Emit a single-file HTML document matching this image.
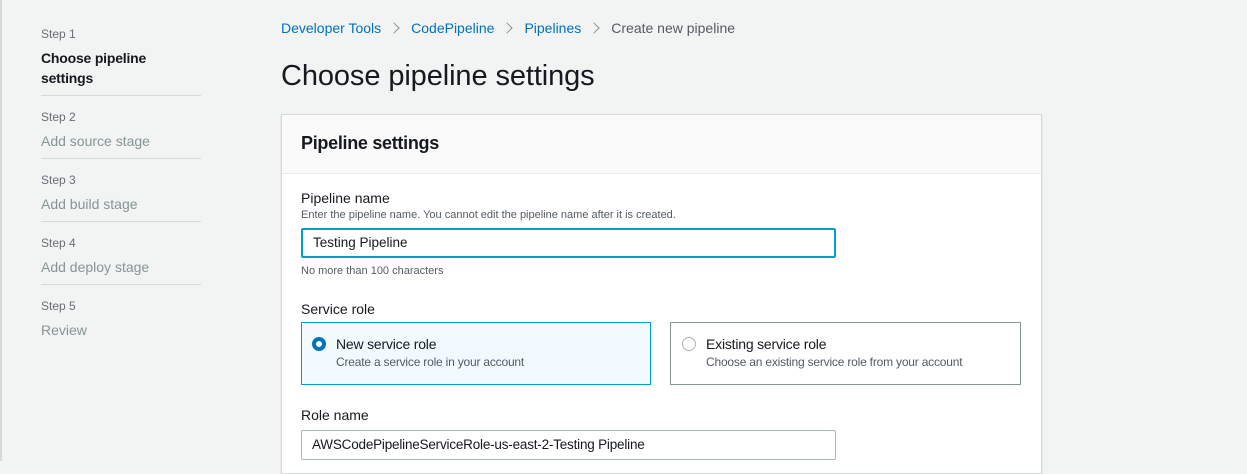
<!DOCTYPE html>
<html><head><style>
*{margin:0;padding:0;box-sizing:border-box}
body{width:1247px;height:461px;overflow:hidden;background:#f2f3f3;font-family:"Liberation Sans",sans-serif;color:#16191f;position:relative}
.a{position:absolute;white-space:nowrap}
.step{font-size:12px;color:#687078}
.sl{font-size:14px;color:#879596}
.hr{position:absolute;left:41px;width:160px;height:1px;background:#d5dbdb}
.bc{font-size:14px;color:#0073bb}
.chev{display:inline-block;width:8px;height:8px;border-top:1.5px solid #879596;border-right:1.5px solid #879596;transform:rotate(45deg);margin:0 13px 1px 9px}
</style></head><body>
<div class="a" style="left:0;top:0;width:2px;height:461px;background:#d5dbdb"></div>
<div class="a step" style="left:41px;top:27px">Step 1</div>
<div class="a" style="left:41px;top:48px;font-size:14px;font-weight:bold;line-height:20px;letter-spacing:-0.2px">Choose pipeline<br>settings</div>
<div class="hr" style="top:95px"></div>
<div class="a step" style="left:41px;top:110px">Step 2</div>
<div class="a sl" style="left:41px;top:133px">Add source stage</div>
<div class="hr" style="top:158px"></div>
<div class="a step" style="left:41px;top:173px">Step 3</div>
<div class="a sl" style="left:41px;top:196px">Add build stage</div>
<div class="hr" style="top:221px"></div>
<div class="a step" style="left:41px;top:236px">Step 4</div>
<div class="a sl" style="left:41px;top:259px">Add deploy stage</div>
<div class="hr" style="top:284px"></div>
<div class="a step" style="left:41px;top:299px">Step 5</div>
<div class="a sl" style="left:41px;top:322px">Review</div>

<div class="a" style="left:281px;top:20px;font-size:14px">
<span class="bc">Developer Tools</span><span class="chev"></span><span class="bc">CodePipeline</span><span class="chev"></span><span class="bc">Pipelines</span><span class="chev"></span><span style="color:#545b64">Create new pipeline</span></div>
<div class="a" style="left:281px;top:60px;font-size:29px;letter-spacing:-0.1px">Choose pipeline settings</div>

<div class="a" style="left:281px;top:114px;width:761px;height:360px;background:#fff;border:1px solid #d5dbdb;box-shadow:0 1px 1px rgba(0,28,36,.2)">
 <div style="height:59px;background:#fafafa;border-bottom:1px solid #eaeded"></div>
</div>
<div class="a" style="left:301px;top:133px;font-size:18px;font-weight:bold;letter-spacing:-0.3px">Pipeline settings</div>
<div class="a" style="left:301px;top:190px;font-size:14px">Pipeline name</div>
<div class="a" style="left:301px;top:209px;font-size:11px;color:#545b64">Enter the pipeline name. You cannot edit the pipeline name after it is created.</div>
<div class="a" style="left:301px;top:228px;width:535px;height:30px;border:2px solid #00a1c9;border-radius:2px;font-size:13.5px;padding:5px 10px">Testing Pipeline</div>
<div class="a" style="left:301px;top:265px;font-size:11px;color:#545b64">No more than 100 characters</div>
<div class="a" style="left:301px;top:301px;font-size:14px">Service role</div>
<div class="a" style="left:301px;top:322px;width:350px;height:63px;background:#f1faff;border:1px solid #00a1c9"></div>
<div class="a" style="left:312px;top:337px;width:14px;height:14px;border-radius:50%;border:4px solid #0073bb;background:#fff"></div>
<div class="a" style="left:336px;top:336px;font-size:14px;letter-spacing:-0.2px">New service role</div>
<div class="a" style="left:336px;top:355px;font-size:12px;color:#545b64;letter-spacing:-0.2px">Create a service role in your account</div>
<div class="a" style="left:670px;top:322px;width:351px;height:63px;background:#fff;border:1px solid #879596"></div>
<div class="a" style="left:682px;top:337px;width:14px;height:14px;border-radius:50%;border:1px solid #aab7b8;background:#fff"></div>
<div class="a" style="left:706px;top:336px;font-size:14px;letter-spacing:-0.2px">Existing service role</div>
<div class="a" style="left:706px;top:355px;font-size:12px;color:#545b64;letter-spacing:-0.2px">Choose an existing service role from your account</div>
<div class="a" style="left:301px;top:407px;font-size:14px">Role name</div>
<div class="a" style="left:301px;top:430px;width:535px;height:30px;border:1px solid #aab7b8;border-radius:2px;font-size:13.5px;padding:6px 10px;letter-spacing:-0.2px">AWSCodePipelineServiceRole-us-east-2-Testing Pipeline</div>
</body></html>
